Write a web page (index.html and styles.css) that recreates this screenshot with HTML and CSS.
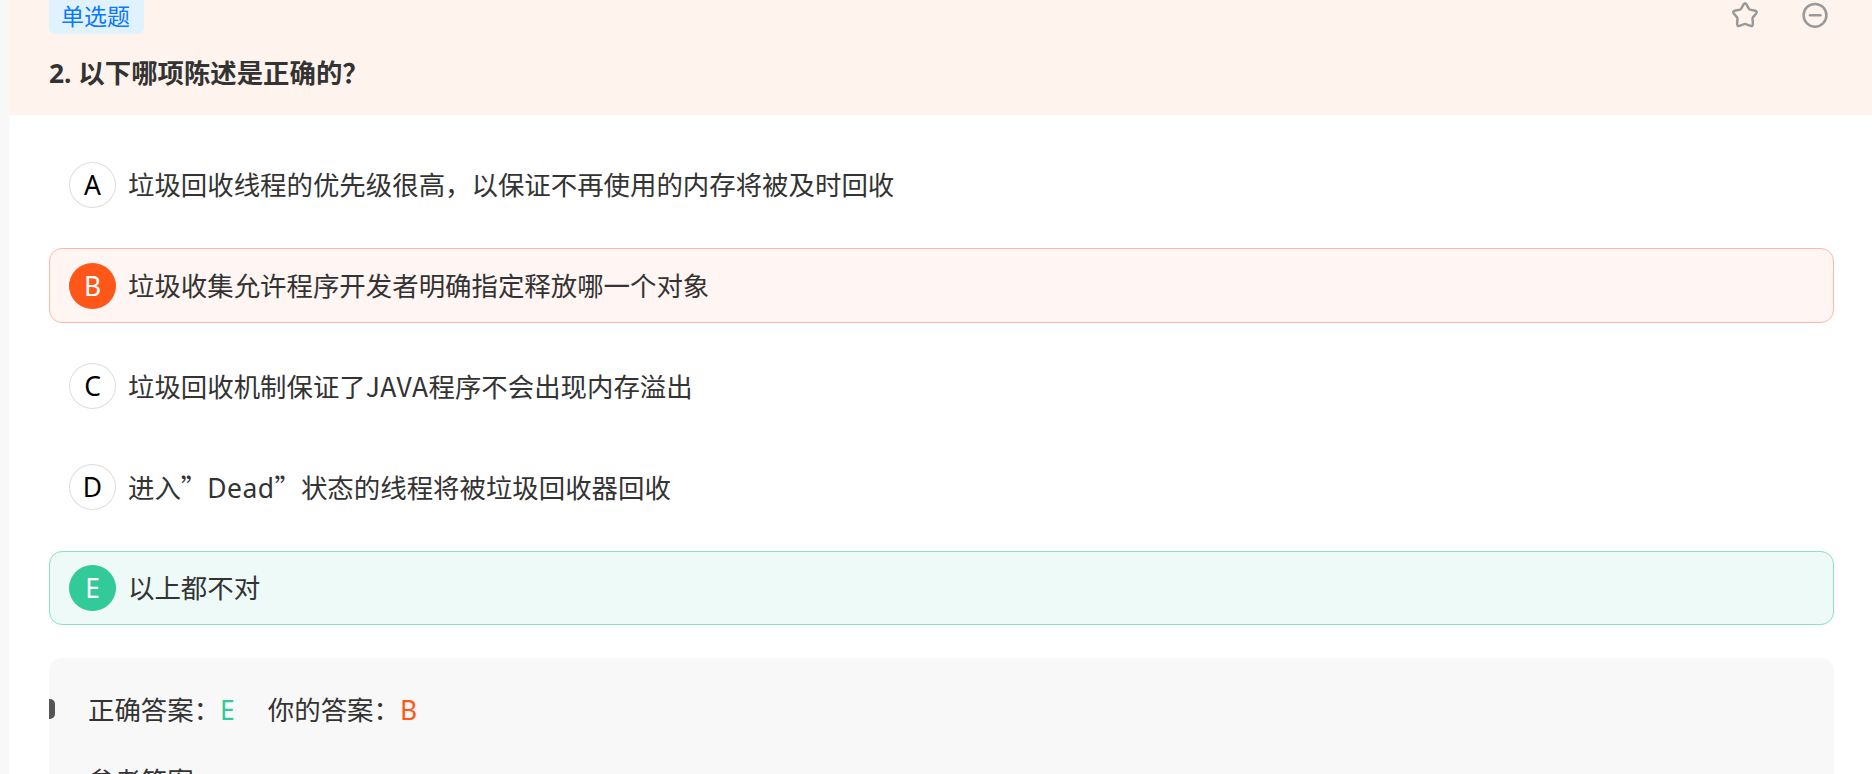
FILE: index.html
```html
<!DOCTYPE html>
<html lang="zh-CN">
<head>
<meta charset="UTF-8" />
<meta name="viewport" content="width=device-width, initial-scale=1.0"/>
<title>单选题</title>
<link rel="stylesheet" href="styles.css">
</head>
<body>
<main class="question">
  <header class="question-header">
    <div class="header-top">
      <span class="tag">单选题</span>
      <div class="actions">
        <svg class="icon" viewBox="0 0 28 28">
          <path d="M12.6 3.4 Q14 1.3 15.4 3.4 L18 7.9 Q18.3 8.4 19 8.6 L24.3 9.8 Q26.6 10.6 25.2 12.5 L21.9 16.4 Q21.5 17 21.5 17.8 L21.9 23 Q21.8 25.5 19.6 24.9 L14 22.9 L8.4 24.9 Q6.2 25.5 6.1 23 L6.5 17.8 Q6.5 17 6.1 16.4 L2.8 12.5 Q1.4 10.6 3.7 9.8 L9 8.6 Q9.7 8.4 10 7.9 Z"/>
        </svg>
        <svg class="icon" viewBox="0 0 28 28">
          <circle cx="14" cy="14.3" r="11.4"/>
          <path d="M9 14.3h10.4"/>
        </svg>
      </div>
    </div>
    <h1 class="title">2. 以下哪项陈述是正确的？</h1>
  </header>

  <div class="options">
    <div class="option">
      <span class="letter">A</span>
      <span class="text">垃圾回收线程的优先级很高，以保证不再使用的内存将被及时回收</span>
    </div>
    <div class="option wrong">
      <span class="letter">B</span>
      <span class="text">垃圾收集允许程序开发者明确指定释放哪一个对象</span>
    </div>
    <div class="option">
      <span class="letter">C</span>
      <span class="text">垃圾回收机制保证了<span class="java">JAVA</span>程序不会出现内存溢出</span>
    </div>
    <div class="option">
      <span class="letter">D</span>
      <span class="text">进入<span class="quote">”</span><span class="state">Dead</span><span class="quote">”</span>状态的线程将被垃圾回收器回收</span>
    </div>
    <div class="option correct">
      <span class="letter">E</span>
      <span class="text">以上都不对</span>
    </div>
  </div>

  <section class="answer">
    <div class="answer-row">
      <span class="marker"></span>
      <span class="answer-item">正确答案：<b class="right-answer">E</b></span>
      <span class="answer-item">你的答案：<b class="your-answer">B</b></span>
    </div>
    <div class="reference">参考答案：</div>
  </section>
</main>
</body>
</html>
```
FILE: styles.css
```css
* {
  box-sizing: border-box;
}

html {
  height: 100%;
  overflow: hidden;
}

body {
  margin: 0;
  padding-left: 9px;
  height: 100%;
  overflow: hidden;
  background: #f8f8f8;
  color: #333;
  font-family: "Noto Sans", "Noto Sans CJK SC", sans-serif;
  font-size: 26.43px;
}

.question {
  height: 100%;
  overflow: hidden;
  background: #fff;
}

.question-header {
  height: 115px;
  padding: 0 40px;
  background: #fff3ee;
}

.header-top {
  display: flex;
  justify-content: space-between;
  height: 34px;
}

.tag {
  width: 95px;
  height: 34px;
  padding-left: 12px;
  border-radius: 0 0 6px 6px;
  background: #e1f2ff;
  color: #0a78ff;
  font-size: 23px;
  line-height: 32px;
}

.actions {
  display: flex;
  gap: 42px;
  padding: 1px 3px 0 0;
}

.icon {
  width: 28px;
  height: 28px;
  fill: none;
  stroke: #999;
  stroke-width: 2.5;
  stroke-linecap: round;
  stroke-linejoin: round;
}

.title {
  margin: 20px 0 0;
  font-size: 26.4px;
  font-weight: 700;
  line-height: 38px;
}

.options {
  display: flex;
  flex-direction: column;
  gap: 26px;
  padding: 32.4px 38px 0 40px;
}

.option {
  display: flex;
  align-items: center;
  gap: 12px;
  height: 74.8px;
  padding: 0 19px;
  border: 1px solid transparent;
  border-radius: 13px;
}

.letter {
  width: 47px;
  height: 46px;
  border: 1px solid #ddd;
  border-radius: 50%;
  color: #000;
  line-height: 44px;
  text-align: center;
}

.text {
  padding-top: 1px;
  line-height: 40px;
}

.quote,
.java {
  font-family: "Noto Sans CJK SC", sans-serif;
}

.java {
  font-kerning: none;
  letter-spacing: 0.3px;
}

.state {
  letter-spacing: 0.5px;
}

.wrong {
  border-color: #ffb8a0;
  background: #fff5f2;
}

.wrong .letter {
  border-color: #ff571a;
  background: #ff571a;
  color: #fff;
}

.correct {
  border-color: #8be0c5;
  background: #edfaf7;
}

.correct .letter {
  border-color: #32ca99;
  background: #32ca99;
  color: #fff;
}

.answer {
  height: 160px;
  margin: 32.6px 38px 0 40px;
  padding-top: 31px;
  border-radius: 13px;
  background: #f8f8f8;
}

.answer-row {
  display: flex;
  align-items: center;
  height: 40px;
}

.marker {
  width: 6px;
  height: 20px;
  margin-right: 33px;
  border-radius: 0 5px 5px 0;
  background: #555;
}

.answer-item {
  margin-right: 33px;
}

.answer-item b {
  font-weight: 400;
}

.right-answer {
  color: #32ca99;
}

.your-answer {
  color: #ff571a;
}

.reference {
  margin: 32px 0 0 39px;
  line-height: 40px;
}
```
